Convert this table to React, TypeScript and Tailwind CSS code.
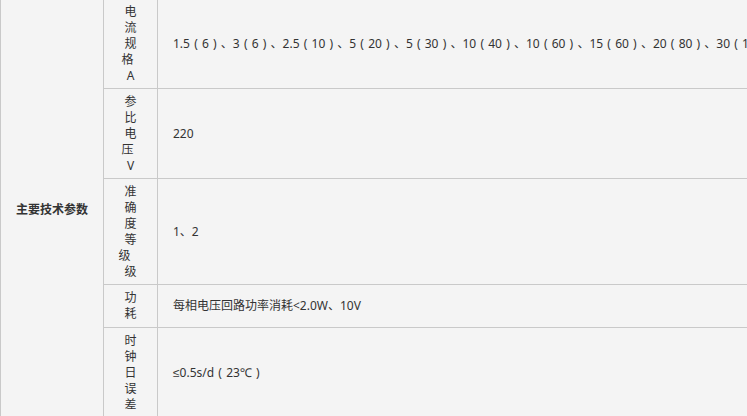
import React from 'react';

type Line = { t: string; shift?: string };

const rows: { label: Line[]; value: string; h: string }[] = [
  {
    label: [{ t: '电' }, { t: '流' }, { t: '规' }, { t: '格', shift: 'pr-[6px]' }, { t: 'A' }],
    value: '1.5（6）、3（6）、2.5（10）、5（20）、5（30）、10（40）、10（60）、15（60）、20（80）、30（100）',
    h: 'h-[89px]',
  },
  {
    label: [{ t: '参' }, { t: '比' }, { t: '电' }, { t: '压', shift: 'pr-[6px]' }, { t: 'V' }],
    value: '220',
    h: 'h-[90px]',
  },
  {
    label: [
      { t: '准' },
      { t: '确' },
      { t: '度' },
      { t: '等' },
      { t: '级', shift: 'pr-[12px]' },
      { t: '级' },
    ],
    value: '1、2',
    h: 'h-[106px]',
  },
  {
    label: [{ t: '功' }, { t: '耗' }],
    value: '每相电压回路功率消耗<2.0W、10V',
    h: 'h-[43px]',
  },
  {
    label: [{ t: '时' }, { t: '钟' }, { t: '日' }, { t: '误' }, { t: '差' }],
    value: '≤0.5s/d（23℃）',
    h: 'h-[91px]',
  },
];

// full-width brackets drawn centred in a 12px slot, like the original font does
const renderValue = (s: string) =>
  s.split(/([（）])/).map((part, i) => {
    if (part === '（' || part === '）') {
      return (
        <span key={i} className="inline-block w-[12px] text-center">
          {part === '（' ? '(' : ')'}
        </span>
      );
    }
    return <React.Fragment key={i}>{part}</React.Fragment>;
  });

const App: React.FC = () => {
  return (
    <div
      className="w-[747px] h-[416px] overflow-hidden bg-[#f4f4f4] text-[#333] text-[12px] leading-[16px] [text-spacing-trim:space-all]"
      style={{ fontFamily: '"Noto Sans", "Liberation Sans", "Noto Sans CJK SC", sans-serif' }}
    >
      <div className="flex w-[1100px] border-l border-[#c9c9c9]">
        {/* Group title */}
        <div className="w-[103px] shrink-0 flex items-center justify-center border-r border-[#c9c9c9] font-bold">
          主要技术参数
        </div>

        {/* Parameter rows */}
        <div className="flex-1 flex flex-col">
          {rows.map((row, i) => (
            <div key={i} className={`${row.h} flex border-b border-[#c9c9c9]`}>
              <div className="w-[54px] shrink-0 flex flex-col items-center justify-center border-r border-[#c9c9c9]">
                {row.label.map((l, j) => (
                  <span key={j} className={l.shift ?? ''}>
                    {l.t}
                  </span>
                ))}
              </div>
              <div className="flex-1 flex items-center pl-[15px] whitespace-nowrap">
                <span>{renderValue(row.value)}</span>
              </div>
            </div>
          ))}
        </div>
      </div>
    </div>
  );
};

export default App;
